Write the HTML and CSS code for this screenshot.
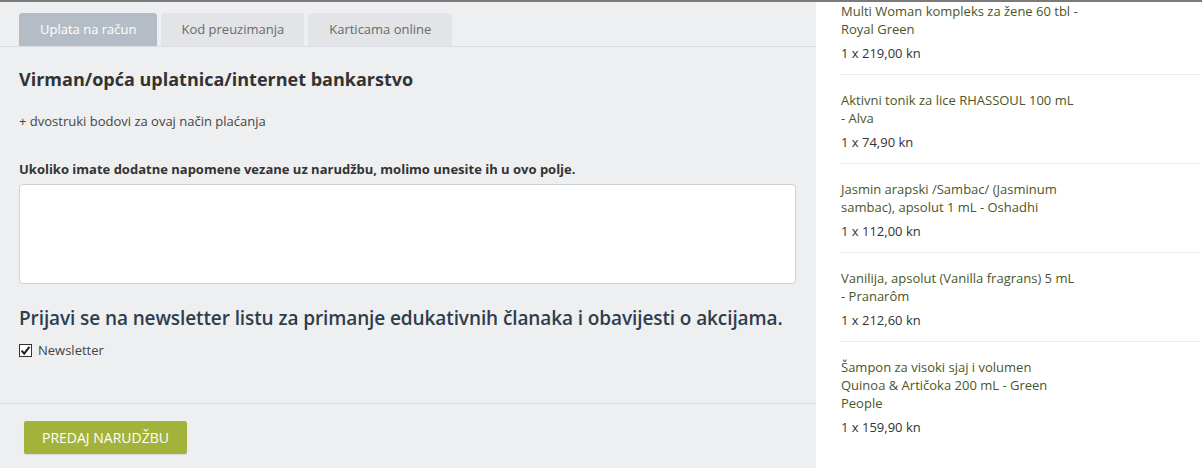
FILE: index.html
```html
<!DOCTYPE html>
<html lang="hr">
<head>
<meta charset="utf-8">
<title>Plaćanje</title>
<link rel="stylesheet" href="styles.css">
</head>
<body>
<div class="page">
  <main class="checkout">
    <nav class="tabs">
      <span class="tab tab-active">Uplata na račun</span>
      <span class="tab">Kod preuzimanja</span>
      <span class="tab">Karticama online</span>
    </nav>
    <section class="pay">
      <h2 class="pay-title">Virman/opća uplatnica/internet bankarstvo</h2>
      <p class="pay-note">+ dvostruki bodovi za ovaj način plaćanja</p>
      <label class="notes-label" for="notes">Ukoliko imate dodatne napomene vezane uz narudžbu, molimo unesite ih u ovo polje.</label>
      <textarea id="notes" class="notes"></textarea>
      <h3 class="news-title">Prijavi se na newsletter listu za primanje edukativnih članaka i obavijesti o akcijama.</h3>
      <label class="news-check"><span class="checkbox"><svg viewBox="0 0 13 13" width="13" height="13"><path d="M2.6 6.6 L5.2 9.6 L10.4 2.8" fill="none" stroke="#222" stroke-width="2"/></svg></span>Newsletter</label>
    </section>
    <footer class="actions">
      <button class="submit">PREDAJ NARUDŽBU</button>
    </footer>
  </main>
  <aside class="cart">
    <div class="item item-first">
      <div class="item-name">Multi Woman kompleks za žene 60 tbl - Royal Green</div>
      <div class="item-price">1 x 219,00 kn</div>
    </div>
    <div class="item">
      <div class="item-name">Aktivni tonik za lice RHASSOUL 100 mL - Alva</div>
      <div class="item-price">1 x 74,90 kn</div>
    </div>
    <div class="item">
      <div class="item-name">Jasmin arapski /Sambac/ (Jasminum sambac), apsolut 1 mL - Oshadhi</div>
      <div class="item-price">1 x 112,00 kn</div>
    </div>
    <div class="item">
      <div class="item-name">Vanilija, apsolut (Vanilla fragrans) 5 mL - Pranarôm</div>
      <div class="item-price">1 x 212,60 kn</div>
    </div>
    <div class="item item-last">
      <div class="item-name">Šampon za visoki sjaj i volumen Quinoa &amp; Artičoka 200 mL - Green People</div>
      <div class="item-price">1 x 159,90 kn</div>
    </div>
  </aside>
</div>
</body>
</html>
```
FILE: styles.css
```css
* { box-sizing: border-box; }
html, body { margin: 0; padding: 0; }
body {
  font-family: "Open Sans", "Liberation Sans", sans-serif;
  font-size: 13px;
  line-height: 18px;
  color: #333;
  background: #fff;
  border-top: 2px solid #7a7a7a;
  height: 468px;
  overflow: hidden;
}
.page {
  display: flex;
  height: 466px;
}
.checkout {
  width: 816px;
  flex: none;
  background: #eeeff1;
  display: flex;
  flex-direction: column;
}
.tabs {
  display: flex;
  gap: 4px;
  padding: 11px 19px 0;
  border-bottom: 1px solid #dcdee1;
}
.tab {
  height: 33px;
  line-height: 33px;
  padding: 0 21px;
  background: #e2e4e7;
  color: #6a6a6a;
  border-radius: 3px 3px 0 0;
  font-size: 13px;
}
.tab:nth-child(2) { padding: 0 20px; }
.tab-active {
  background: #b4bdc5;
  color: #fff;
}
.pay {
  padding: 20px 20px 44px 19px;
  border-bottom: 1px solid #d9dadd;
}
.pay-title {
  margin: 0;
  font-size: 18px;
  line-height: 24px;
  font-weight: 700;
  color: #333;
}
.pay-note {
  margin: 21px 0 0;
  color: #444;
}
.notes-label {
  display: block;
  margin-top: 30px;
  font-weight: 700;
  color: #333;
}
.notes {
  display: block;
  width: 777px;
  height: 100px;
  margin-top: 6px;
  background: #fff;
  border: 1px solid #cfd1d4;
  border-radius: 4px;
  resize: none;
  font-family: inherit;
}
.news-title {
  margin: 21px 0 0;
  font-size: 19px;
  line-height: 26px;
  font-weight: 600;
  color: #2f3d4c;
  letter-spacing: -0.1px;
  white-space: nowrap;
}
.news-check {
  display: flex;
  align-items: center;
  margin-top: 10px;
  color: #444;
}
.checkbox {
  display: block;
  width: 13px;
  height: 13px;
  margin-right: 6px;
  background: #fff;
  border: 1px solid #333;
  position: relative;
}
.checkbox svg {
  position: absolute;
  left: -1px;
  top: -1px;
}
.actions {
  padding: 17px 24px 0;
}
.submit {
  height: 33px;
  padding: 0 18px;
  border: none;
  border-radius: 2px;
  background: #a3b23b;
  color: #fff;
  font-family: inherit;
  font-size: 14px;
  box-shadow: 0 1px 1px rgba(0,0,0,0.08);
}
.cart {
  flex: 1;
  padding: 0 2px 0 25px;
  background: #fff;
}
.item {
  padding: 16px 0 12px;
  border-bottom: 1px solid #ececec;
}
.item-first { padding-top: 0; }
.item-last { border-bottom: none; }
.item-name {
  width: 238px;
  color: #4a5628;
}
.item-price {
  margin-top: 6px;
  color: #333;
}
```
